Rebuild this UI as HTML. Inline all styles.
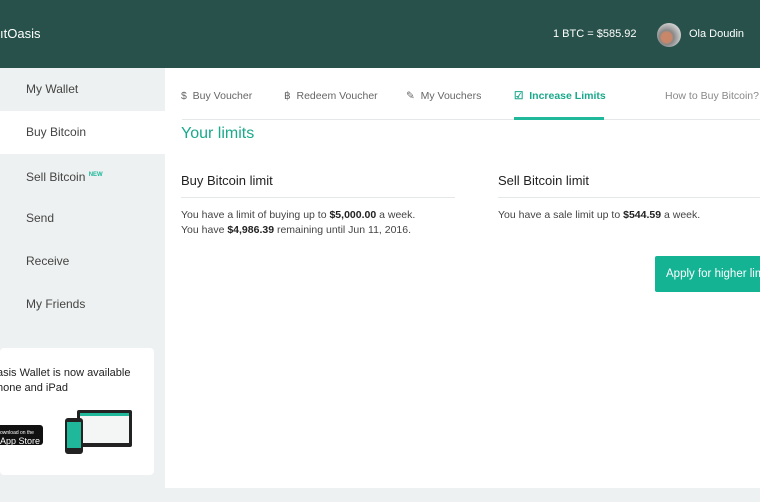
<!DOCTYPE html>
<html><head><style>
*{margin:0;padding:0;box-sizing:border-box}
body{width:760px;height:502px;overflow:hidden;background:#eef1f1;font-family:"Liberation Sans",sans-serif;position:relative;color:#333}
.hdr{position:absolute;left:0;top:0;width:760px;height:68px;background:#27514a}
.abs{position:absolute;white-space:nowrap}
.side{position:absolute;left:0;top:68px;width:165px;height:434px;background:#eef1f1}
.item{position:absolute;left:0;width:165px;height:43px;font-size:12px;color:#444;padding-left:26px;line-height:43px}
.main{position:absolute;left:165px;top:68px;width:595px;height:420px;background:#fff}
.tab{position:absolute;top:90px;font-size:10.5px;color:#666;white-space:nowrap}
b{color:#222}
</style></head><body>
<div class="hdr">
<div class="abs" style="left:0;top:26px;color:#fff;font-size:13px">ıtOasis</div>
<div class="abs" style="left:553px;top:28px;color:#fff;font-size:11px">1 BTC = $585.92</div>
<div class="abs" style="left:657px;top:23px;width:24px;height:24px;border-radius:50%;background:radial-gradient(circle at 40% 60%,#c9876a 0 25%,#888 35%,#ccc 70%)"></div>
<div class="abs" style="left:689px;top:28px;color:#fff;font-size:11px">Ola Doudin</div>
</div>
<div class="side"></div>
<div class="main"></div>
<div class="item" style="top:68px">My Wallet</div>
<div class="item" style="top:111px;background:#fff">Buy Bitcoin</div>
<div class="item" style="top:154px">Sell Bitcoin <sup style="color:#1fb89a;font-size:6px;font-weight:bold">NEW</sup></div>
<div class="item" style="top:197px">Send</div>
<div class="item" style="top:240px">Receive</div>
<div class="item" style="top:283px">My Friends</div>
<div class="abs" style="left:0;top:348px;width:154px;height:127px;background:#fff;border-radius:4px"></div>
<div class="abs" style="left:-3px;top:366px;font-size:11px;color:#222;line-height:15px">asis Wallet is now available<br>hone and iPad</div>
<div class="abs" style="left:-6px;top:425px;width:49px;height:20px;background:#111;border-radius:3px;color:#fff;font-size:9px;line-height:8px;padding:2px 0 0 6px"><span style="font-size:5px">ownload on the</span><br>App Store</div>
<div class="abs" style="left:77px;top:410px;width:55px;height:37px;background:#222;border-radius:2px"><div style="margin:3px;height:30px;background:#f4f6f6;border-top:3px solid #1fb89a"></div></div>
<div class="abs" style="left:65px;top:418px;width:18px;height:36px;background:#222;border-radius:3px"><div style="margin:4px 2px;height:26px;background:#1fb89a"></div></div>

<div class="abs" style="left:182px;top:119px;width:578px;height:1px;background:#e4e8e8"></div>
<div class="tab" style="left:181px">$ &nbsp;Buy Voucher</div>
<div class="tab" style="left:284px">฿ &nbsp;Redeem Voucher</div>
<div class="tab" style="left:406px">✎ &nbsp;My Vouchers</div>
<div class="tab" style="left:514px;color:#1aa98c;font-weight:bold">☑ &nbsp;Increase Limits</div>
<div class="abs" style="left:514px;top:117px;width:90px;height:3px;background:#1fb89a"></div>
<div class="tab" style="left:665px;color:#888">How to Buy Bitcoin?</div>

<div class="abs" style="left:181px;top:125px;font-size:16px;color:#1aa98c">Your limits</div>
<div class="abs" style="left:181px;top:173px;font-size:13px;color:#222">Buy Bitcoin limit</div>
<div class="abs" style="left:181px;top:197px;width:274px;height:1px;background:#e4e8e8"></div>
<div class="abs" style="left:181px;top:208px;font-size:10.5px;color:#444;line-height:15px">You have a limit of buying up to <b>$5,000.00</b> a week.<br>You have <b>$4,986.39</b> remaining until Jun 11, 2016.</div>
<div class="abs" style="left:498px;top:173px;font-size:13px;color:#222">Sell Bitcoin limit</div>
<div class="abs" style="left:498px;top:197px;width:262px;height:1px;background:#e4e8e8"></div>
<div class="abs" style="left:498px;top:208px;font-size:10.5px;color:#444;line-height:15px">You have a sale limit up to <b>$544.59</b> a week.</div>
<div class="abs" style="left:655px;top:256px;width:110px;height:36px;background:#13b394;border-radius:2px;color:#fff;font-size:11.5px;line-height:36px;padding-left:11px">Apply for higher limits</div>
</body></html>
